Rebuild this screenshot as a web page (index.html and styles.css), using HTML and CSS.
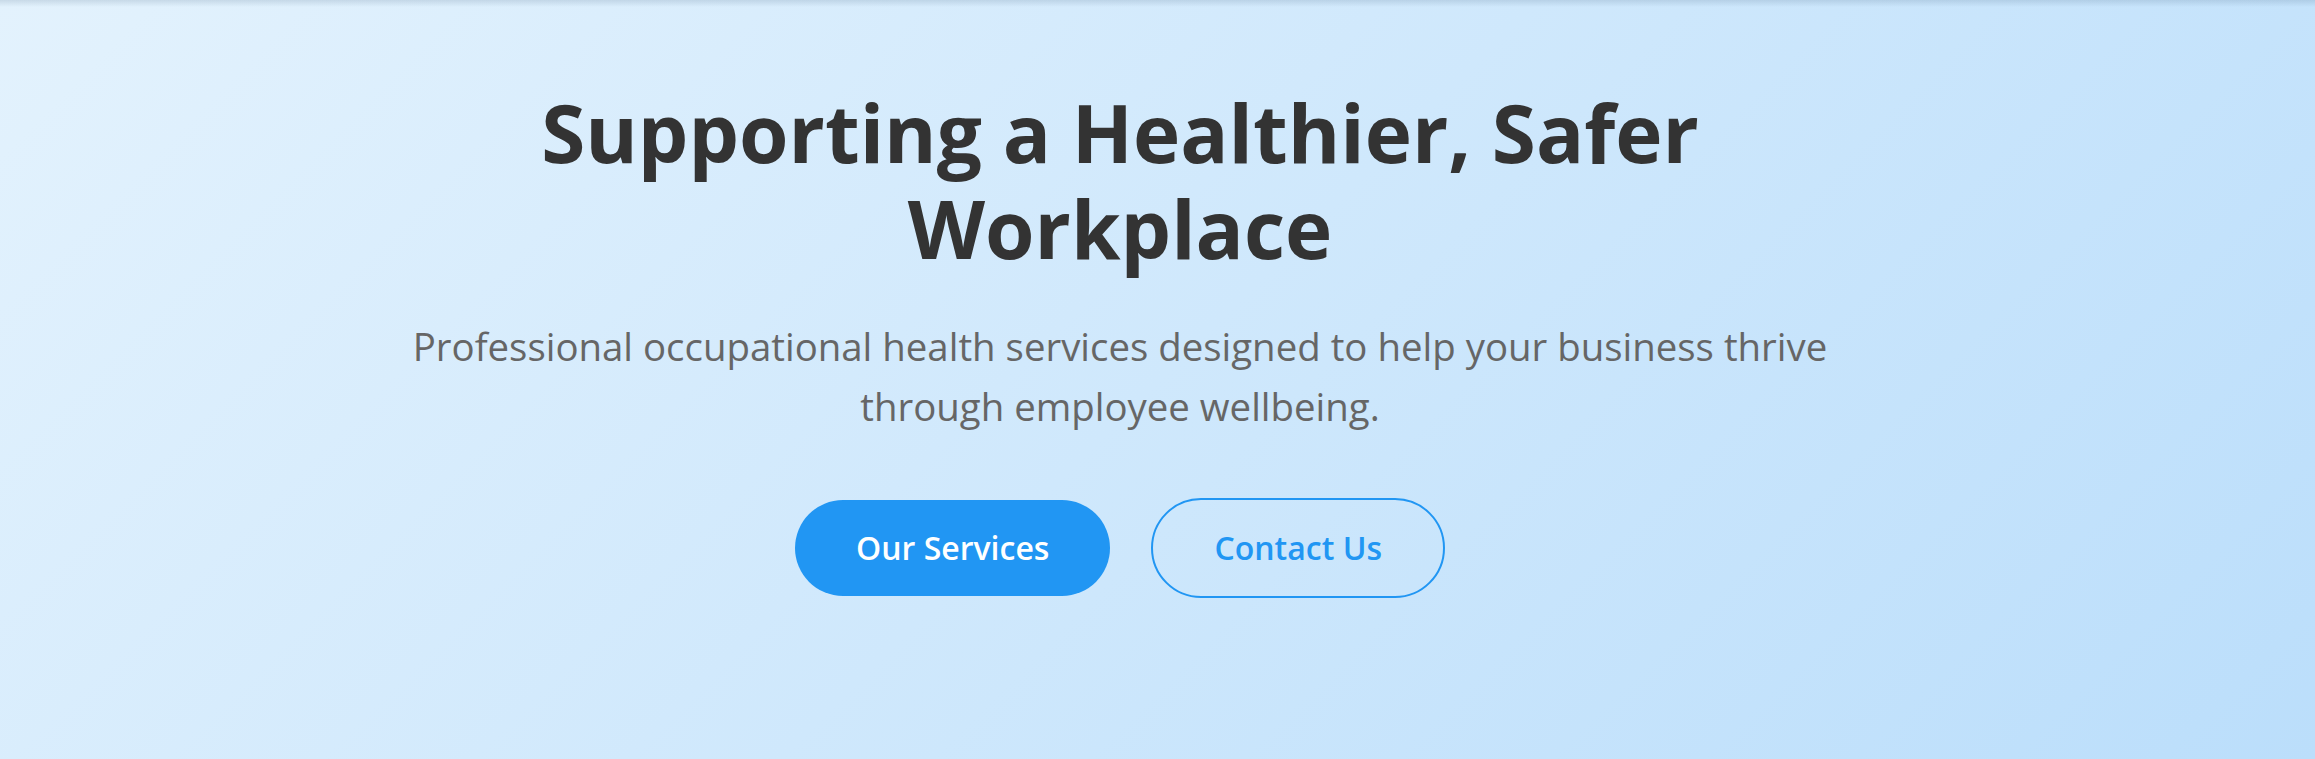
FILE: index.html
```html
<!DOCTYPE html>
<html lang="en">
<head>
<meta charset="utf-8">
<title>Occupational Health</title>
<link rel="stylesheet" href="styles.css">
</head>
<body>

<section class="hero">
	<div class="hero-inner">
		<h1 class="hero-title">Supporting a Healthier, Safer Workplace</h1>
		<p class="hero-text">Professional occupational health services designed to help your business thrive through employee wellbeing.</p>
		<div class="hero-actions">
			<a href="#services" class="btn btn-primary">Our Services</a>
			<a href="#contact" class="btn btn-outline">Contact Us</a>
		</div>
	</div>
</section>

</body>
</html>
```

FILE: styles.css
```css
* { box-sizing:border-box; }
body { margin:0; font-family:"Open Sans", "Noto Sans", sans-serif; color:#333; }

.hero { position:relative; height:759px; overflow:hidden; padding:84px 75px 0 0; background:linear-gradient(135deg, #e3f2fd 0%, #bbdefb 100%); }
.hero::before { content:""; position:absolute; left:0; right:0; top:0; height:7px; background:linear-gradient(to bottom, rgba(60,90,120,0.16), rgba(60,90,120,0)); }

.hero-inner { max-width:1480px; margin:0 auto; text-align:center; }
.hero-title { margin:0 auto 40px; max-width:1200px; font-size:80px; line-height:1.2; font-weight:700; color:#333; }
.hero-text { margin:0 auto 62px; font-size:38.4px; line-height:60px; color:#666; }

.hero-actions { display:flex; justify-content:center; align-items:center; gap:41px; }
.btn { display:inline-block; font-size:32px; line-height:50px; font-weight:600; text-decoration:none; border-radius:60px; }
.btn-primary { padding:23px 61px; background:#2196f3; color:#fff; }
.btn-outline { padding:23px 61px; border:2px solid #2196f3; color:#2196f3; background:transparent; }
```
